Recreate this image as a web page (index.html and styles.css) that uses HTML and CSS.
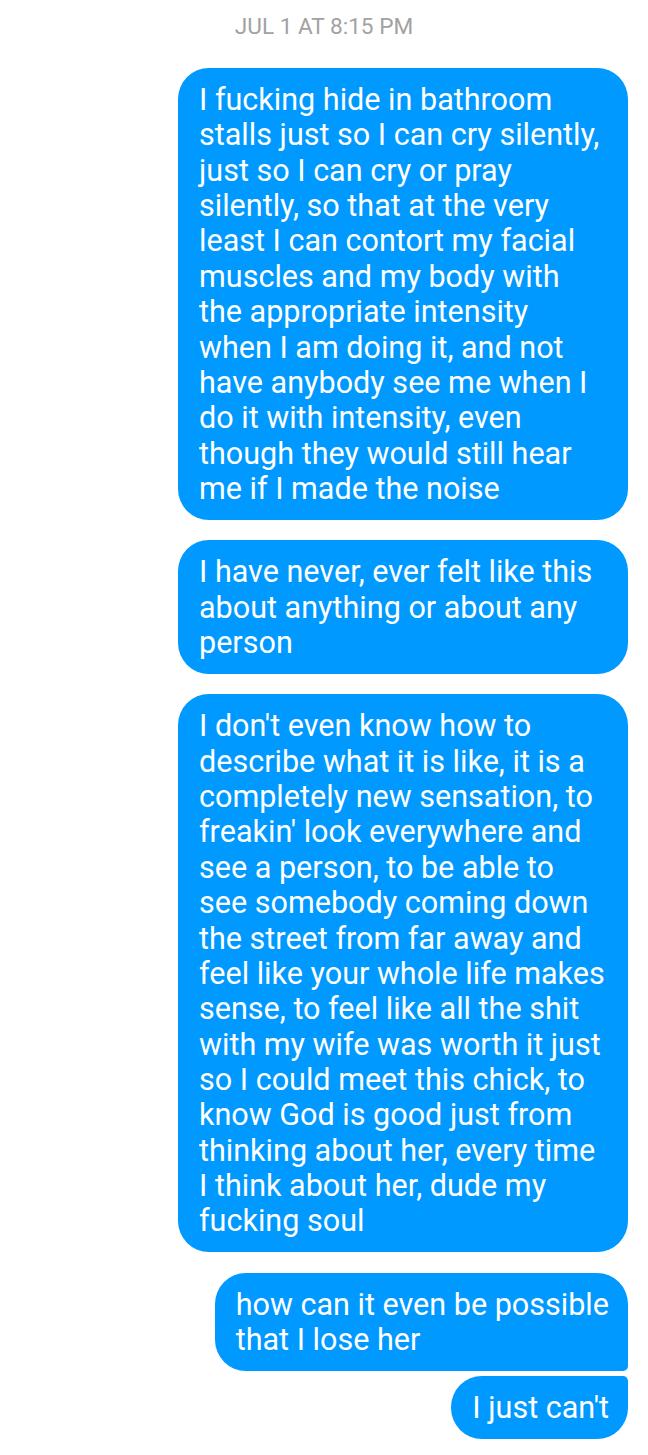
FILE: index.html
```html
<!DOCTYPE html>
<html>
<head>
<meta charset="utf-8">
<link rel="stylesheet" href="styles.css">
</head>
<body>
<div class="thread">
  <div class="stamp">JUL 1 AT 8:15 PM</div>
  <div class="group">
    <div class="bubble">I fucking hide in bathroom stalls just so I can cry silently, just so I can cry or pray silently, so that at the very least I can contort my facial muscles and my body with the appropriate intensity when I am doing it, and not have anybody see me when I do it with intensity, even though they would still hear me if I made the noise</div>
  </div>
  <div class="group">
    <div class="bubble">I have never, ever felt like this about anything or about any person</div>
  </div>
  <div class="group">
    <div class="bubble">I don't even know how to describe what it is like, it is a completely new sensation, to freakin' look everywhere and see a person, to be able to see somebody coming down the street from far away and feel like your whole life makes sense, to feel like all the shit with my wife was worth it just so I could meet this chick, to know God is good just from thinking about her, every time I think about her, dude my fucking soul</div>
  </div>
  <div class="group stack">
    <div class="bubble first">how can it even be possible<br>that I lose her</div>
    <div class="bubble last">I just can't</div>
  </div>
</div>
</body>
</html>
```

FILE: styles.css
```css
html, body {
  margin: 0;
  padding: 0;
  background: #ffffff;
}
.thread {
  font-family: Roboto, "Noto Sans", sans-serif;
  display: flex;
  flex-direction: column;
  padding: 13px 20px 16px 20px;
}
.stamp {
  text-align: center;
  color: #a2a2a2;
  font-size: 22.6px;
  line-height: 28px;
  margin-bottom: 27px;
}
.group {
  display: flex;
  flex-direction: column;
  align-items: flex-end;
  margin-bottom: 20.5px;
}
.stack {
  gap: 5px;
  margin-bottom: 0;
}
.bubble {
  max-width: 407px;
  background: #0099ff;
  color: #ffffff;
  font-size: 30.55px;
  line-height: 35.36px;
  padding: 14px 22px 13.5px 21px;
  border-radius: 31px;
}
.bubble.first {
  border-bottom-right-radius: 5px;
  padding-right: 19px;
}
.bubble.last {
  border-top-right-radius: 5px;
  padding-right: 19px;
}
```
